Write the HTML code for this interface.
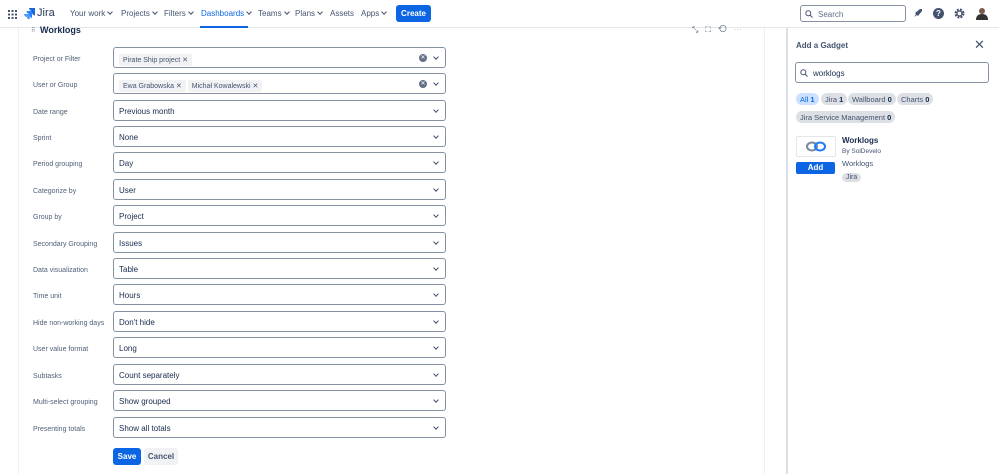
<!DOCTYPE html>
<html><head><style>
*{box-sizing:border-box;margin:0;padding:0}
body{width:999px;height:474px;overflow:hidden;background:#fff;font-family:"Liberation Sans",sans-serif;color:#172b4d;position:relative}
.nav{position:absolute;left:0;top:0;width:999px;height:28px;border-bottom:1px solid #e4e6ea;background:#fff}
.nav .it{position:absolute;top:9px;font-size:8px;color:#44546f}
.nav .dd::after{content:"";display:inline-block;width:3px;height:3px;border-right:1px solid #44546f;border-bottom:1px solid #44546f;transform:rotate(45deg);margin-left:3px;position:relative;top:-2px}
.lp{position:absolute;left:18px;top:28px;width:747px;height:446px;border-left:1px solid #f0f1f3;border-right:1px solid #f0f1f3}
.rp{position:absolute;left:786px;top:28px;width:213px;height:446px;border-left:2px solid #dcdfe4}
.lbl{position:absolute;left:33px;font-size:7px;color:#505f79}
.inp{position:absolute;left:113px;width:333px;height:21px;border:1px solid #8590a2;border-radius:3px;font-size:8px;color:#172b4d;padding:6px 5px}
.inp .ch{position:absolute;right:7px;top:7px;width:4px;height:4px;border-right:1.2px solid #44546f;border-bottom:1.2px solid #44546f;transform:rotate(45deg)}
.inp .cl{position:absolute;right:18px;top:6px;width:8px;height:8px;border-radius:50%;background:#626f86;color:#fff;font-size:6px;line-height:8px;text-align:center}
.tag{display:inline-block;background:#f1f2f4;font-size:7px;padding:2px 4px;margin-top:-3px;margin-right:2px;border-radius:2px;color:#44546f}
.chip{position:absolute;font-size:7.5px;background:#dcdfe4;border-radius:8px;padding:2px 4px;height:12px;color:#44546f}
.chip b{color:#172b4d}
</style></head><body>
<div class="nav">
<svg style="position:absolute;left:8px;top:10px" width="9" height="9"><g fill="#44546f"><rect x="0" y="0" width="2" height="2"/><rect x="3.5" y="0" width="2" height="2"/><rect x="7" y="0" width="2" height="2"/><rect x="0" y="3.5" width="2" height="2"/><rect x="3.5" y="3.5" width="2" height="2"/><rect x="7" y="3.5" width="2" height="2"/><rect x="0" y="7" width="2" height="2"/><rect x="3.5" y="7" width="2" height="2"/><rect x="7" y="7" width="2" height="2"/></g></svg>
<svg style="position:absolute;left:24px;top:8px" width="11" height="11"><path d="M11 0H5a3 3 0 0 0 3 3v1.5A3 3 0 0 0 11 7.5Z" fill="#1868db"/><path d="M8 3H2.5a3 3 0 0 0 3 3v1A3 3 0 0 0 8 10Z" fill="#2684ff"/><path d="M5.5 6H0a3 3 0 0 0 3 3v1a3 3 0 0 0 3 1Z" fill="#4c9aff"/></svg>
<span class="it" style="left:37px;top:7px;font-size:11px;color:#253858">Jira</span>
<span class="it dd" style="left:70px">Your work</span>
<span class="it dd" style="left:121px">Projects</span>
<span class="it dd" style="left:164px">Filters</span>
<span class="it dd" style="left:201px;color:#0c66e4">Dashboards</span>
<div style="position:absolute;left:200px;top:26px;width:48px;height:2px;background:#0c66e4"></div>
<span class="it dd" style="left:258px">Teams</span>
<span class="it dd" style="left:295px">Plans</span>
<span class="it" style="left:330px">Assets</span>
<span class="it dd" style="left:361px">Apps</span>
<div style="position:absolute;left:396px;top:5px;width:35px;height:17px;background:#0c66e4;border-radius:3px;color:#fff;font-size:8px;font-weight:bold;text-align:center;line-height:17px">Create</div>
<div style="position:absolute;left:800px;top:5px;width:106px;height:17px;border:1px solid #8590a2;border-radius:3px;font-size:8px;color:#626f86;padding:4px 0 0 17px">Search</div>
<svg style="position:absolute;left:805px;top:10px" width="8" height="8"><circle cx="3.3" cy="3.3" r="2.5" fill="none" stroke="#44546f" stroke-width="1"/><path d="M5 5L7.5 7.5" stroke="#44546f"/></svg>
<svg style="position:absolute;left:912px;top:8px" width="11" height="11"><path d="M2 9L4 6L3 5L8 1L10 1L10 3L6 8L5 7L2 9Z" fill="#44546f"/></svg>
<div style="position:absolute;left:933px;top:8px;width:11px;height:11px;border-radius:50%;background:#44546f;color:#fff;font-size:8px;font-weight:bold;text-align:center;line-height:11px">?</div>
<svg style="position:absolute;left:954px;top:8px" width="11" height="11"><circle cx="5.5" cy="5.5" r="4" fill="none" stroke="#44546f" stroke-width="2" stroke-dasharray="2 1.2"/><circle cx="5.5" cy="5.5" r="2.5" fill="none" stroke="#44546f" stroke-width="1.3"/></svg>
<svg style="position:absolute;left:976px;top:7px" width="12" height="13"><circle cx="6" cy="4" r="3" fill="#7a5a48"/><path d="M0 13Q0 7 6 7Q12 7 12 13Z" fill="#333"/></svg>
</div>
<div class="lp"></div>
<div style="position:absolute;left:31px;top:27px;font-size:6px;color:#626f86">⠿</div>
<div style="position:absolute;left:40px;top:25px;font-size:9px;color:#172b4d;font-weight:bold">Worklogs</div>
<div style="position:absolute;left:692px;top:25px;font-size:8px;color:#44546f;letter-spacing:7px">⤡⛶⟲⋯</div>

<div class="lbl" style="top:56px">Project or Filter</div>
<div class="inp" style="top:47px;padding-top:7px"><span class="tag">Pirate Ship project ✕</span><span class="cl">✕</span><span class="ch"></span></div>
<div class="lbl" style="top:82px">User or Group</div>
<div class="inp" style="top:73px;padding-top:7px"><span class="tag">Ewa Grabowska ✕</span><span class="tag">Michał Kowalewski ✕</span><span class="cl">✕</span><span class="ch"></span></div>
<div class="lbl" style="top:109px">Date range</div><div class="inp" style="top:100px">Previous month<span class="ch"></span></div>
<div class="lbl" style="top:135px">Sprint</div><div class="inp" style="top:126px">None<span class="ch"></span></div>
<div class="lbl" style="top:161px">Period grouping</div><div class="inp" style="top:152px">Day<span class="ch"></span></div>
<div class="lbl" style="top:188px">Categorize by</div><div class="inp" style="top:179px">User<span class="ch"></span></div>
<div class="lbl" style="top:214px">Group by</div><div class="inp" style="top:205px">Project<span class="ch"></span></div>
<div class="lbl" style="top:241px">Secondary Grouping</div><div class="inp" style="top:232px">Issues<span class="ch"></span></div>
<div class="lbl" style="top:267px">Data visualization</div><div class="inp" style="top:258px">Table<span class="ch"></span></div>
<div class="lbl" style="top:293px">Time unit</div><div class="inp" style="top:284px">Hours<span class="ch"></span></div>
<div class="lbl" style="top:320px">Hide non-working days</div><div class="inp" style="top:311px">Don't hide<span class="ch"></span></div>
<div class="lbl" style="top:346px">User value format</div><div class="inp" style="top:337px">Long<span class="ch"></span></div>
<div class="lbl" style="top:373px">Subtasks</div><div class="inp" style="top:364px">Count separately<span class="ch"></span></div>
<div class="lbl" style="top:399px">Multi-select grouping</div><div class="inp" style="top:390px">Show grouped<span class="ch"></span></div>
<div class="lbl" style="top:426px">Presenting totals</div><div class="inp" style="top:417px">Show all totals<span class="ch"></span></div>
<div style="position:absolute;left:113px;top:448px;width:28px;height:17px;background:#0c66e4;border-radius:3px;color:#fff;font-size:8px;font-weight:bold;text-align:center;line-height:17px">Save</div>
<div style="position:absolute;left:144px;top:448px;width:34px;height:17px;background:#f1f2f4;border-radius:3px;color:#44546f;font-size:8px;font-weight:bold;text-align:center;line-height:17px">Cancel</div>

<div class="rp"></div>
<div style="position:absolute;left:796px;top:41px;font-size:8px;font-weight:bold;color:#44546f">Add a Gadget</div>
<div style="position:absolute;left:974px;top:37px;font-size:13px;color:#44546f">✕</div>
<div style="position:absolute;left:795px;top:62px;width:194px;height:21px;border:1px solid #8590a2;border-radius:3px;font-size:8px;padding:6px 0 0 17px">worklogs</div>
<svg style="position:absolute;left:800px;top:69px" width="8" height="8"><circle cx="3.3" cy="3.3" r="2.5" fill="none" stroke="#44546f" stroke-width="1"/><path d="M5 5L7.5 7.5" stroke="#44546f"/></svg>
<div class="chip" style="left:796px;top:93px;background:#cce0ff;color:#0c66e4">All <b style="color:#0c66e4">1</b></div>
<div class="chip" style="left:821px;top:93px">Jira <b>1</b></div>
<div class="chip" style="left:848px;top:93px">Wallboard <b>0</b></div>
<div class="chip" style="left:897px;top:93px">Charts <b>0</b></div>
<div class="chip" style="left:796px;top:111px">Jira Service Management <b>0</b></div>
<div style="position:absolute;left:796px;top:136px;width:40px;height:21px;border:1px solid #e4e6ea;border-radius:2px"></div>
<svg style="position:absolute;left:806px;top:140px" width="20" height="13"><ellipse cx="6" cy="6.5" rx="5" ry="4" fill="none" stroke="#7a869a" stroke-width="2"/><ellipse cx="14" cy="6.5" rx="5" ry="4" fill="none" stroke="#1d7afc" stroke-width="2"/></svg>
<div style="position:absolute;left:796px;top:162px;width:39px;height:12px;background:#0c66e4;border-radius:2px;color:#fff;font-size:8px;font-weight:bold;text-align:center;line-height:12px">Add</div>
<div style="position:absolute;left:842px;top:136px;font-size:8px;font-weight:bold">Worklogs</div>
<div style="position:absolute;left:842px;top:148px;font-size:6.5px;color:#44546f">By SolDevelo</div>
<div style="position:absolute;left:842px;top:159px;font-size:7.5px;color:#44546f">Worklogs</div>
<div style="position:absolute;left:842px;top:173px;font-size:7px;background:#dcdfe4;border-radius:6px;padding:1px 4px;color:#44546f">Jira</div>
</body></html>
